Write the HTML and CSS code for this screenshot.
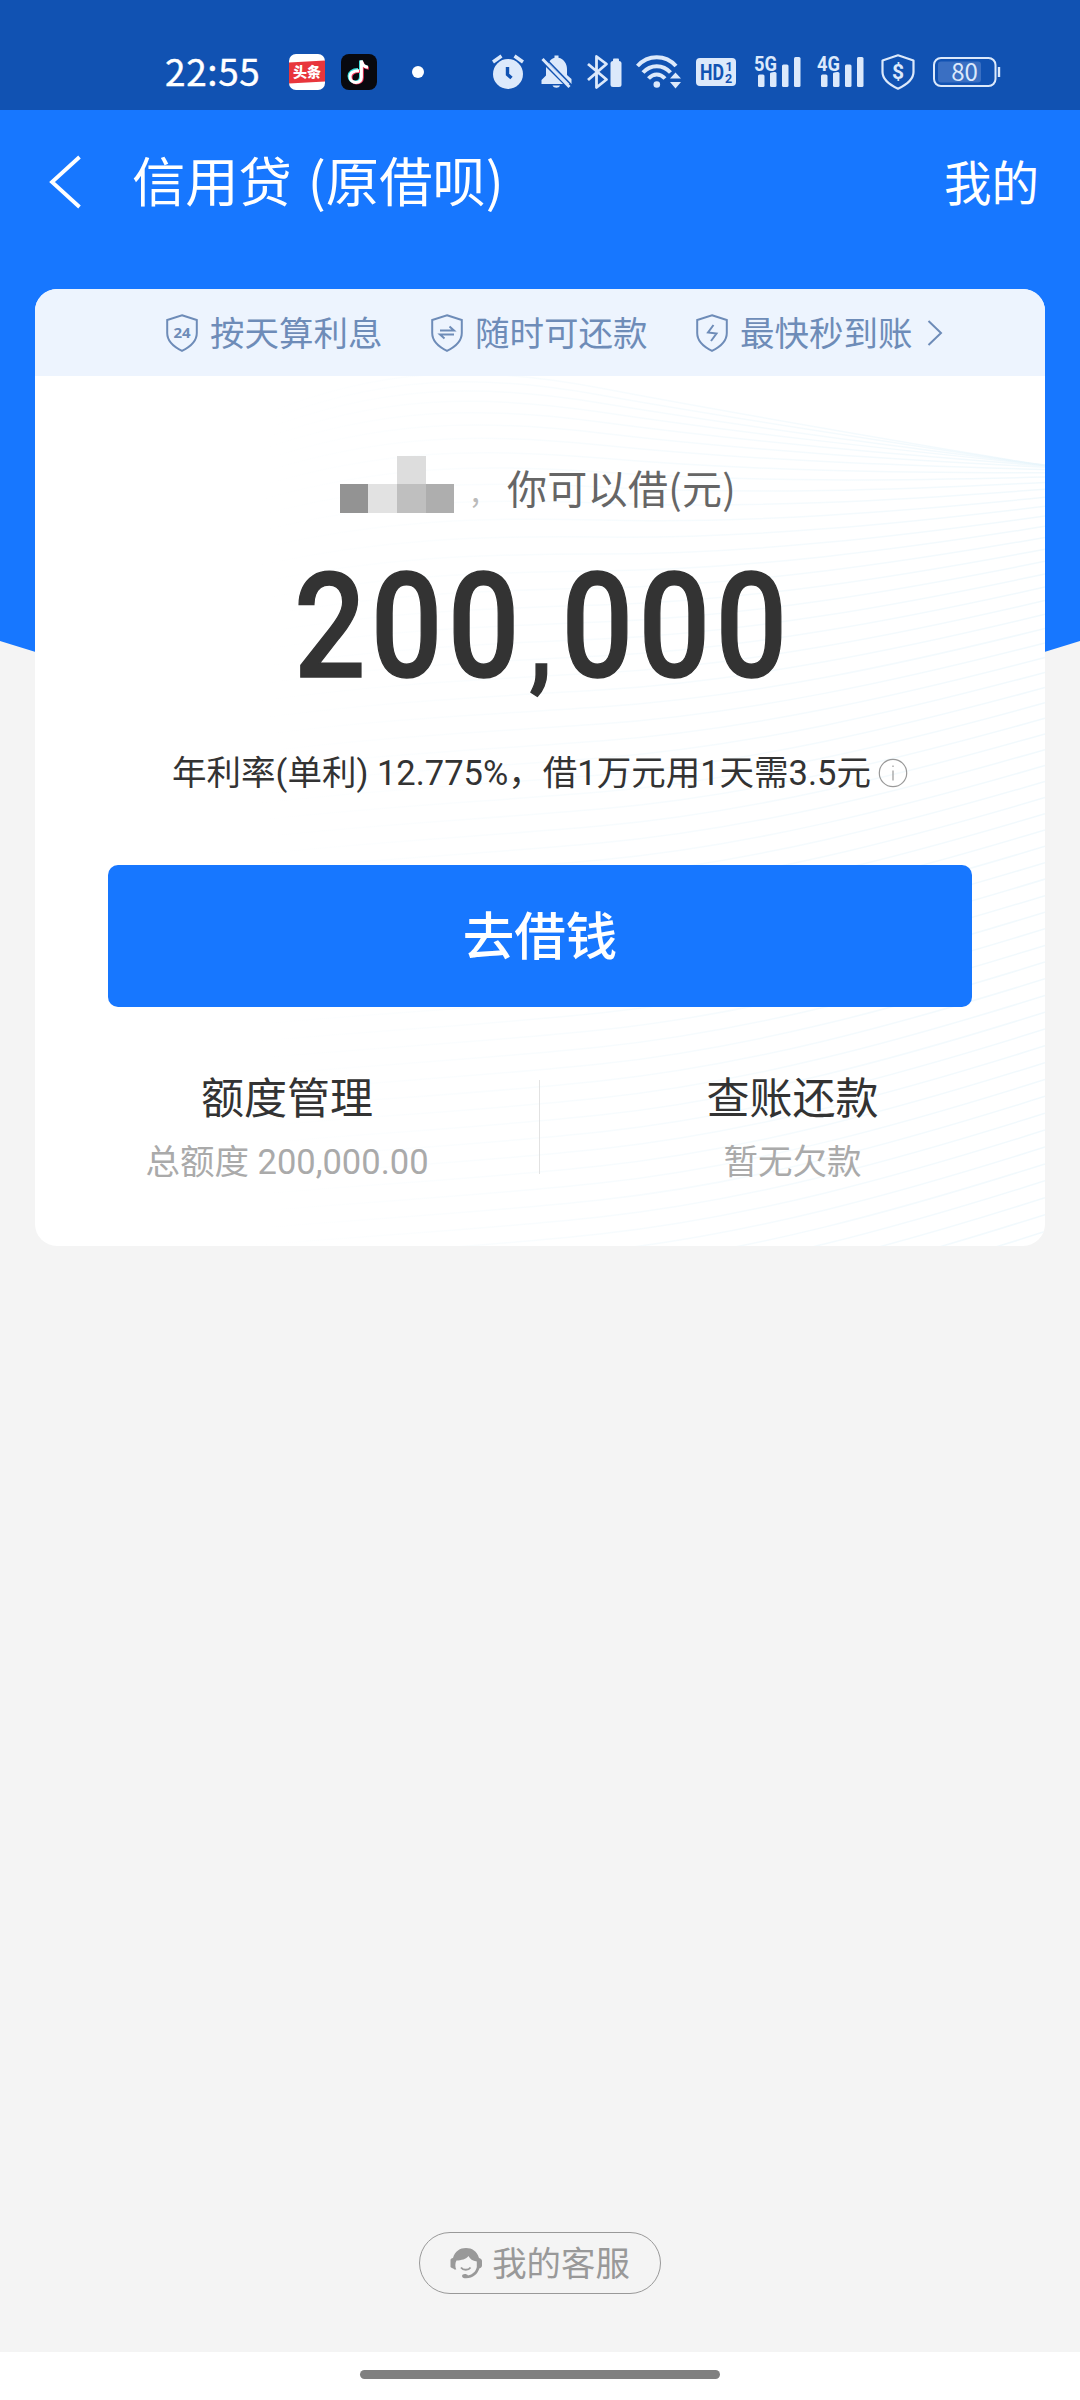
FILE: index.html
```html
<!DOCTYPE html>
<html lang="zh-CN">
<head>
<meta charset="utf-8">
<title>信用贷</title>
<link rel="stylesheet" href="styles.css">
</head>
<body>
<div class="screen">
  <div class="status">
    <span class="time">22:55</span>
    <svg class="app-toutiao" width="36" height="36" viewBox="0 0 36 36">
      <rect width="36" height="36" rx="7" fill="#fff"/>
      <path d="M0 8.500L36 6.500V27.500L0 29.500Z" fill="#e8363c"/>
      <text x="18" y="23.300" text-anchor="middle" class="toutiao-text">头条</text>
    </svg>
    <svg class="app-tiktok" width="36" height="36" viewBox="0 0 36 36">
      <rect width="36" height="36" rx="8" fill="#08090f"/>
      <g fill="none" stroke-width="3">
        <path d="M17 15.600C11.500 15.500 8 18.500 8 22C8 25.500 11 28 14 28C17.500 28 19.500 25.500 19.500 22.500V6.500C20.500 10.500 23 12.300 26 12.700" stroke="#35e0dc"/>
        <path d="M19 17.500C13 17 10 20 10 23C10 27 13 29 15.500 29C19 29 21.300 27 21.300 24V8C22 12 25 14 27.800 14.200" stroke="#f5365c"/>
        <path d="M18 16.700C12.500 16.500 9 19 9 22.500C9 26.300 12 28.400 14.800 28.400C18.500 28.400 20.400 26.200 20.400 23.300V6.500C21 11 24 13 27 13.300" stroke="#fff"/>
      </g>
    </svg>
    <span class="dot"></span>
    <svg class="alarm" width="32" height="36" viewBox="0 0 32 36">
      <circle cx="16" cy="20" r="15" fill="#dce9fb"/>
      <path d="M1 8L9.500 2M31 8L22.500 2" stroke="#dce9fb" stroke-width="3.400"/>
      <path d="M15.500 13V20.500L19.500 24" fill="none" stroke="#1152b2" stroke-width="3.400"/>
    </svg>
    <svg class="bell" width="31" height="36" viewBox="0 0 31 36">
      <path d="M7.500 9C9 6 11 4.500 13.500 3.800V1.500H17.500V3.800C23 5 26 10 26 15V21L30.500 25V30H27L7.500 9Z" fill="#dce9fb"/>
      <path d="M5 13L22 30H.5V26L5 21.500Z" fill="#dce9fb"/>
      <path d="M1.500 5L28.500 33" stroke="#dce9fb" stroke-width="3"/>
      <path d="M4.500 4.200L30.500 31" stroke="#1152b2" stroke-width="1.600"/>
      <path d="M11.500 31.500H19C18 34.500 13 34.500 11.500 31.500Z" fill="#dce9fb"/>
    </svg>
    <svg class="bluetooth" width="35" height="36" viewBox="0 0 35 36">
      <path d="M1 10L19.500 25.500L9.500 33.500V2.500L19.500 10L1 26" fill="none" stroke="#dce9fb" stroke-width="2.800" stroke-linejoin="round"/>
      <rect x="23.500" y="7" width="11" height="26" rx="2.500" fill="#dce9fb"/>
      <rect x="26" y="4.500" width="6" height="4" rx="1" fill="#dce9fb"/>
    </svg>
    <svg class="wifi" width="45" height="36" viewBox="0 0 45 36">
      <g fill="none" stroke="#dce9fb" stroke-width="4">
        <path d="M1.500 12C12 .3 29.500 .3 40 12"/>
        <path d="M7 18.500C14.500 10 27 10 34.500 18.500"/>
        <path d="M12.500 24.500C17.500 19 24 19 29 24.500"/>
      </g>
      <circle cx="20.800" cy="30.500" r="3.300" fill="#dce9fb"/>
      <path d="M34 24.500L39.500 18.500L45 24.500ZM34 28L39.500 34.500L45 28Z" fill="#dce9fb"/>
    </svg>
    <svg class="hd" width="40" height="28" viewBox="0 0 40 28">
      <rect width="40" height="28" rx="4" fill="#dce9fb"/>
      <text x="4" y="22" class="hd-main" textLength="24" lengthAdjust="spacingAndGlyphs">HD</text>
      <text x="29.500" y="13" class="hd-sub">1</text>
      <text x="29" y="24.500" class="hd-sub">2</text>
    </svg>
    <svg class="signal" width="47" height="36" viewBox="0 0 47 36">
      <g fill="#dce9fb">
        <rect x="4" y="20.500" width="6.500" height="12.500" rx="1.500"/>
        <rect x="16" y="18" width="6.500" height="15" rx="1.500"/>
        <rect x="28" y="10.500" width="6.500" height="22.500" rx="1.500"/>
        <rect x="40" y="3" width="6.500" height="30" rx="1.500"/>
      </g>
      <text x="0" y="16.500" class="net" textLength="23" lengthAdjust="spacingAndGlyphs">5G</text>
    </svg>
    <svg class="signal second" width="47" height="36" viewBox="0 0 47 36">
      <g fill="#dce9fb">
        <rect x="4" y="20.500" width="6.500" height="12.500" rx="1.500"/>
        <rect x="16" y="18" width="6.500" height="15" rx="1.500"/>
        <rect x="28" y="10.500" width="6.500" height="22.500" rx="1.500"/>
        <rect x="40" y="3" width="6.500" height="30" rx="1.500"/>
      </g>
      <text x="0" y="16.500" class="net" textLength="23" lengthAdjust="spacingAndGlyphs">4G</text>
    </svg>
    <svg class="pay-shield" width="34" height="36" viewBox="0 0 34 36">
      <path d="M17 1.300L32.500 6.500V18C32.500 25.500 26 30.500 17 34.700C8 30.500 1.500 25.500 1.500 18V6.500Z" fill="none" stroke="#dce9fb" stroke-width="2.200" stroke-linejoin="round"/>
      <text x="17" y="25" text-anchor="middle" class="dollar">$</text>
    </svg>
    <svg class="battery" width="68" height="30" viewBox="0 0 68 30">
      <rect x="1" y="1" width="61.500" height="28" rx="7" fill="none" stroke="#dce9fb" stroke-width="2"/>
      <rect x="5" y="4.500" width="43" height="21" rx="3" fill="#3a6fc2"/>
      <path d="M66 10V20" stroke="#dce9fb" stroke-width="2.400"/>
      <text x="31.500" y="23.500" text-anchor="middle" class="level">80</text>
    </svg>
  </div>

  <header class="nav">
    <svg width="34" height="56" viewBox="0 0 34 56"><path d="M32.500 3L5 28L32.500 53" fill="none" stroke="#fff" stroke-width="3.800"/></svg>
    <h1>信用贷 (原借呗)</h1>
    <span class="mine">我的</span>
  </header>

  <main class="content">
    <section class="card">
      <svg class="waves" width="1010" height="869" viewBox="35 376 1010 869">
        <defs>
          <linearGradient id="fade" gradientUnits="userSpaceOnUse" x1="260" y1="0" x2="1045" y2="0">
            <stop offset="0" stop-color="#e8f5fb" stop-opacity="0"/>
            <stop offset=".45" stop-color="#e8f5fb" stop-opacity=".35"/>
            <stop offset="1" stop-color="#e8f5fb" stop-opacity=".6"/>
          </linearGradient>
        </defs>
        <g id="wave-lines" fill="none" stroke="url(#fade)" stroke-width="1.500"></g>
      </svg>
      <div class="perks">
        <div class="perk">
          <svg width="32" height="38" viewBox="0 0 32 38"><path d="M16 1.200L30.800 6V19C30.800 27 25 32.500 16 36.800C7 32.500 1.200 27 1.200 19V6Z" class="line"/><text x="16" y="24" text-anchor="middle" class="hours">24</text></svg>
          <span>按天算利息</span>
        </div>
        <div class="perk">
          <svg width="32" height="38" viewBox="0 0 32 38"><path d="M16 1.200L30.800 6V19C30.800 27 25 32.500 16 36.800C7 32.500 1.200 27 1.200 19V6Z" class="line"/><path d="M9 16.500H23L18.500 12.500M23 20.500H9L13.500 24.500" class="line"/></svg>
          <span>随时可还款</span>
        </div>
        <div class="perk">
          <svg width="32" height="38" viewBox="0 0 32 38"><path d="M16 1.200L30.800 6V19C30.800 27 25 32.500 16 36.800C7 32.500 1.200 27 1.200 19V6Z" class="line"/><path d="M17.500 11L12 18.500L20.500 19.500L15 27" class="line"/></svg>
          <span>最快秒到账</span>
        </div>
        <svg class="more" width="16" height="28" viewBox="0 0 16 28"><path d="M1.500 2L14 14L1.500 26" class="line"/></svg>
      </div>

      <div class="greeting">
        <div class="mask">
          <i></i><i></i><i class="m1"></i><i></i>
          <i class="m2"></i><i class="m3"></i><i class="m4"></i><i class="m5"></i>
        </div>
        <span class="comma">,</span>
        <span class="can">你可以借(元)</span>
      </div>

      <div class="amount"><span>200<b>,</b>000</span></div>

      <div class="rate">
        <span>年利率(单利) 12.775%，借1万元用1天需3.5元</span>
        <svg width="30" height="30" viewBox="0 0 30 30"><circle cx="15" cy="15" r="13.700" fill="none" stroke="#999" stroke-width="1.200"/><path d="M15 12.500V22.500M15 7.500V9" stroke="#999" stroke-width="1.200"/></svg>
      </div>

      <button class="borrow">去借钱</button>

      <div class="links">
        <div class="link"><h2>额度管理</h2><p>总额度 200,000.00</p></div>
        <div class="rule"></div>
        <div class="link"><h2>查账还款</h2><p>暂无欠款</p></div>
      </div>
    </section>

    <a class="service">
      <svg width="32" height="32" viewBox="0 0 32 32">
        <path d="M3 11C5 4 10 1 16 1C22 1 27 4 29 11C31 11.500 32 12.500 32 14V18.500C32 20 31 21 29.500 21.200C27.500 27 23.500 31 16 31.200H14.500C12 31 11.500 29 12.500 27.800C14 26.500 17 26.800 18 28.500C22.500 27.500 26 24.500 26.800 20V14.500C22.500 14 20 12 18.500 9C16.500 12 11 13.500 6.500 13.500C5 16 5 20 6.300 22.500L4.500 22.500C3.500 21 1.500 21.500 .5 20V13C.5 12 1.500 11.200 3 11Z" fill="#999"/>
        <path d="M11 20.500C13 23.500 18.500 23.500 20.500 20.500" fill="none" stroke="#999" stroke-width="1.800"/>
      </svg>
      <span>我的客服</span>
    </a>
  </main>

  <div class="home"><span></span></div>
</div>
<script src="waves.js"></script>
</body>
</html>
```
FILE: styles.css
```css
* { box-sizing: border-box; margin: 0; padding: 0; }
body {
  width: 1080px;
  height: 2400px;
  font-family: Roboto, "Noto Sans CJK SC", sans-serif;
  color: #333;
  background: #f4f4f4;
}
svg { display: block; flex: none; overflow: visible; }
span, h1, h2, p { white-space: nowrap; }
.screen { height: 2400px; display: flex; flex-direction: column; overflow: hidden; }

.status {
  height: 110px;
  padding: 34px 0 0 165px;
  display: flex;
  align-items: center;
  background: #1152b2;
}
.time { width: 96px; margin-top: -4px; font: 400 37px/37px "Noto Sans CJK SC", sans-serif; color: #fff; letter-spacing: .6px; -webkit-text-stroke: .4px #fff; }
.app-toutiao { margin-left: 28px; }
.toutiao-text { font: 900 14px "Noto Sans CJK SC", sans-serif; fill: #fff; }
.app-tiktok { margin-left: 16px; }
.dot { width: 12px; height: 12px; margin-left: 35px; border-radius: 50%; background: #fff; }
.alarm { margin-left: 68px; }
.bell { margin-left: 17px; }
.bluetooth { margin-left: 15px; }
.wifi { margin-left: 14px; }
.hd { margin-left: 15px; }
.hd-main { font: 700 22px Roboto, sans-serif; fill: #1152b2; }
.hd-sub { font: 700 12.500px Roboto, sans-serif; fill: #1152b2; }
.signal { margin-left: 18px; }
.signal.second { margin-left: 16px; }
.net { font: 700 21px Roboto, sans-serif; fill: #dce9fb; stroke: #1152b2; stroke-width: 3px; paint-order: stroke; }
.pay-shield { margin-left: 17px; }
.dollar { font: 700 21px Roboto, sans-serif; fill: #dce9fb; }
.battery { margin-left: 18px; }
.level { font: 400 24px "Noto Sans CJK SC", sans-serif; fill: #dce9fb; }

.nav {
  height: 144px;
  padding: 0 41px 0 47px;
  display: flex;
  align-items: center;
  background: #1777ff;
  color: #fff;
}
.nav h1 { margin: -6px 0 0 51px; font: 400 53.300px/76px "Noto Sans CJK SC", sans-serif; word-spacing: 4px; }
.mine { margin: -2px 0 0 auto; font: 400 47.500px/70px "Noto Sans CJK SC", sans-serif; }

.content {
  flex: 1;
  padding: 35px 35px 58px;
  display: flex;
  flex-direction: column;
  align-items: center;
  justify-content: space-between;
  background: linear-gradient(#1777ff, #1777ff) 0 0 / 100% 387px no-repeat;
  position: relative;
}
.content::before {
  content: "";
  position: absolute;
  left: 0;
  top: 387px;
  width: 1080px;
  height: 100px;
  background: #1777ff;
  clip-path: polygon(0 0, 100% 0, 70% 100%, 30% 100%);
}
.card {
  position: relative;
  width: 1010px;
  height: 957px;
  border-radius: 22px;
  overflow: hidden;
  background: #fff;
}
.waves { position: absolute; left: 0; top: 87px; }
.card > div, .card > button { position: relative; }
.perks {
  height: 87px;
  padding: 0 0 0 131px;
  display: flex;
  align-items: center;
  background: #edf4fe;
  color: #6e8cb8;
  font: 400 34.500px/50px "Noto Sans CJK SC", sans-serif;
}
.perk { display: flex; align-items: center; gap: 12px; width: 265px; }
.perk span { margin-top: -4px; }
.perk:nth-child(3) { width: 217px; }
.perks .more { margin-left: 14px; }
.line { fill: none; stroke: #6e8cb8; stroke-width: 2; }
.hours { font: 700 15px "Open Sans", sans-serif; fill: #6e8cb8; }

.greeting { height: 57px; margin-top: 80px; padding-left: 305px; display: flex; }
.mask { display: grid; grid-template-columns: 28px 29px 29px 28px; grid-template-rows: 28px 29px; }
.m1 { background: #ddd; }
.m2 { background: #939393; }
.m3 { background: #e2e2e2; }
.m4 { background: #bfbfbf; }
.m5 { background: #aeaeae; }
.comma { width: 53px; padding: 12px 0 0 17px; color: #bbb; font: 400 32px/40px "Noto Sans CJK SC", sans-serif; }
.can { color: #666; font: 400 40px/64px "Noto Sans CJK SC", sans-serif; letter-spacing: .3px; margin-top: -1px; }

.amount { height: 176px; display: flex; justify-content: center; }
.amount span {
  font: 500 146px/176px Roboto, sans-serif;
  letter-spacing: 6px;
  margin-right: -6px;
  transform: scaleX(.865);
  padding-top: 27px;
  -webkit-text-stroke: 1.400px #333;
}
.amount b { font-weight: 500; font-size: 118px; margin: 0 5px; }

.rate { height: 50px; margin-top: 59px; display: flex; align-items: center; justify-content: center; gap: 7px; font-size: 34.500px; line-height: 50px; font-weight: 400; }
.borrow {
  display: block;
  width: 864px;
  height: 142px;
  margin: 67px auto 0;
  border: 0;
  border-radius: 10px;
  background: #1777ff;
  color: #fff;
  font: 500 51.500px/136px "Noto Sans CJK SC", sans-serif;
  padding-bottom: 6px;
}
.links { margin-top: 56px; height: 125px; display: grid; grid-template-columns: 504px 1px 505px; text-align: center; }
.link h2 { font: 400 43px/64px "Noto Sans CJK SC", sans-serif; }
.link p { font-size: 34.500px; line-height: 50px; margin-top: 10px; color: #aaa; font-weight: 400; }
.rule { height: 94px; margin-top: 17px; background: #e2e2e2; }

.service {
  width: 242px;
  height: 62px;
  border: 1.500px solid #999;
  border-radius: 31px;
  display: flex;
  align-items: center;
  justify-content: center;
  gap: 10px;
  color: #999;
  font: 400 34.400px/50px "Noto Sans CJK SC", sans-serif;
}
.service span { margin-top: -5px; }
.home { height: 48px; background: #fff; padding-top: 18px; display: flex; justify-content: center; }
.home span { width: 360px; height: 9px; border-radius: 5px; background: #808080; }
```
FILE: waves.js
```js
// Fan of fine contour lines that converge towards the card's upper right edge.
const group = document.getElementById("wave-lines");
let start = 388;
for (let i = 0; i < 64; i++) {
  const k = 1 - Math.exp(-(start - 388) / 165);
  const end = start + 78 - 183 * k;
  const slopeMid = 0.19 - 0.3 * k;
  const slopeEnd = 0.17 - 0.49 * k;
  const path = document.createElementNS("http://www.w3.org/2000/svg", "path");
  path.setAttribute(
    "d",
    `M260 ${start + 28} C380 ${start - 22 + 40 * k} 480 ${start - 120 * slopeMid} 600 ${start} ` +
    `C750 ${start + 150 * slopeMid} 900 ${end - 145 * slopeEnd} 1045 ${end}`
  );
  group.appendChild(path);
  start += 7 + 10 * Math.min(1, i / 10);
}
```
